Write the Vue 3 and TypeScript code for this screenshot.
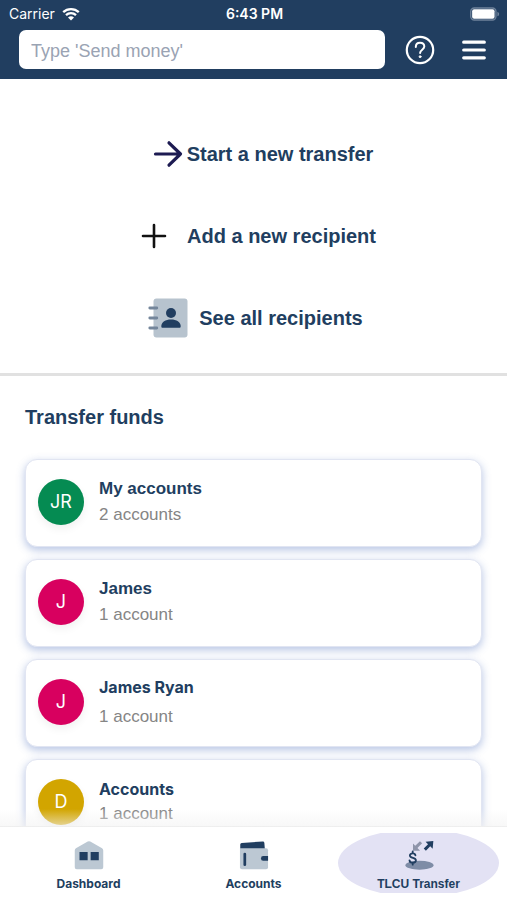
<script setup lang="ts">
import { ref } from 'vue'

interface Recipient {
  initials: string
  name: string
  detail: string
  tone: 'green' | 'pink' | 'gold'
  spacing: 'normal' | 'loose' | 'tight'
  face: 'classic' | 'modern'
}

const query = ref('')

const recipients: Recipient[] = [
  { initials: 'JR', name: 'My accounts', detail: '2 accounts', tone: 'green', spacing: 'normal', face: 'classic' },
  { initials: 'J', name: 'James', detail: '1 account', tone: 'pink', spacing: 'normal', face: 'classic' },
  { initials: 'J', name: 'James Ryan', detail: '1 account', tone: 'pink', spacing: 'loose', face: 'modern' },
  { initials: 'D', name: 'Accounts', detail: '1 account', tone: 'gold', spacing: 'tight', face: 'modern' },
]
</script>

<template>
  <div class="app">
    <header class="header">
      <div class="status">
        <div class="status-left">
          <span>Carrier</span>
          <svg class="wifi" viewBox="0 0 18 14" aria-hidden="true">
            <path d="M1.2 5.2a11.2 11.2 0 0 1 15.6 0M4 8.1a7.2 7.2 0 0 1 10 0" fill="none" stroke="#fff" stroke-width="2.3" />
            <path d="M9 13.6 6 10.6a4.3 4.3 0 0 1 6 0z" fill="#fff" />
          </svg>
        </div>
        <span class="time">6:43 PM</span>
        <div class="status-right">
          <svg class="battery" viewBox="0 0 31 14" aria-hidden="true">
            <rect x=".8" y=".8" width="26" height="12.4" rx="3.6" fill="none" stroke="#6f839b" stroke-width="1.4" />
            <rect x="2.2" y="2.2" width="23.2" height="9.6" rx="2" fill="#fff" />
            <path d="M28.3 4.6c2.4.8 2.4 4 0 4.8z" fill="#6f839b" />
          </svg>
        </div>
      </div>
      <div class="toolbar">
        <input v-model="query" class="search" type="text" aria-label="Search" placeholder="Type 'Send money'" />
        <button class="icon-button" type="button" aria-label="Help">
          <svg width="30" height="30" viewBox="0 0 30 30" fill="none" stroke="#fff" stroke-linecap="round" stroke-linejoin="round">
            <circle cx="15" cy="15" r="13.2" stroke-width="2.2" />
            <path d="M10.8 12c0-2.600 1.700-4.200 4.200-4.200s4.300 1.500 4.300 3.800c0 3-4.200 3.200-4.200 6.300" stroke-width="2" />
            <circle cx="15.1" cy="21.7" r="1" fill="#fff" stroke-width=".8" />
          </svg>
        </button>
        <button class="icon-button" type="button" aria-label="Menu">
          <svg width="24" height="20" viewBox="0 0 24 20" stroke="#fff" stroke-width="3.2" stroke-linecap="round">
            <path d="M1.7 2.2h20.6M1.7 10h20.6M1.7 17.8h20.6" />
          </svg>
        </button>
      </div>
    </header>

    <main class="content">
      <section class="actions">
        <button class="action action-start" type="button">
          <svg width="30" height="28" viewBox="0 0 30 28" fill="none" stroke="#1d1b52" stroke-width="3.2" stroke-linecap="round" stroke-linejoin="round">
            <path d="M2.5 14h25M16 2.8 27.5 14 16 25.2" />
          </svg>
          Start a new transfer
        </button>
        <button class="action action-add" type="button">
          <svg width="26" height="26" viewBox="0 0 26 26" stroke="#111" stroke-width="2.6" stroke-linecap="round">
            <path d="M13 2v22M2 13h22" />
          </svg>
          Add a new recipient
        </button>
        <button class="action action-all" type="button">
          <svg width="40" height="40" viewBox="0 0 40 40">
            <rect x="5.5" y=".5" width="34" height="39" rx="3" fill="#b7c3ce" />
            <path d="M1.8 10h7M1.8 20h7M1.8 30h7" stroke="#74869b" stroke-width="2.8" stroke-linecap="round" />
            <circle cx="23" cy="15" r="5" fill="#213e60" />
            <path d="M13.3 28.2c0-4.300 4.200-6.800 9.700-6.800s9.700 2.500 9.700 6.800c0 1-.5 1.600-1.400 1.600H14.700c-.9 0-1.400-.6-1.400-1.600z" fill="#213e60" />
          </svg>
          See all recipients
        </button>
      </section>

      <section class="funds">
        <h2 class="title">Transfer funds</h2>
        <ul class="cards">
          <li v-for="(item, index) in recipients" :key="index">
            <button class="card" type="button">
              <span class="avatar" :class="item.tone">{{ item.initials }}</span>
              <span class="card-text" :class="item.spacing">
                <span class="name" :class="item.face">{{ item.name }}</span>
                <span class="detail">{{ item.detail }}</span>
              </span>
            </button>
          </li>
        </ul>
      </section>
    </main>

    <nav class="tabs" aria-label="Main">
      <a class="tab" href="#dashboard">
        <svg width="32" height="32" viewBox="0 0 32 32" aria-hidden="true">
          <path d="M16 1.2q.7 0 1.3.4L29.5 8.6q1.2.8 1.2 2.2v17.4q0 2-2 2H3.3q-2 0-2-2V10.8q0-1.4 1.2-2.2L14.7 1.6q.6-.4 1.3-.4z" fill="#bcc8d3" />
          <path d="M6.2 12.500h8.400v8.400H6.200zM17.700 12.500h8.400v8.400h-8.400z" fill="#213e60" />
        </svg>
        <span>Dashboard</span>
      </a>
      <a class="tab" href="#accounts">
        <svg width="32" height="32" viewBox="0 0 32 32" aria-hidden="true">
          <path d="M1.8 4.600q0-1.500 1.500-1.600L25 1.600q1.600-.1 1.700 1.400l.5 6.500H1.800z" fill="#213e60" />
          <path d="M1.500 8.500h27q2 0 2 2v17.700q0 2-2 2h-25q-2 0-2-2z" fill="#bcc8d3" />
          <path d="M6.500 14.500v11" stroke="#213e60" stroke-width="2.800" stroke-linecap="round" />
          <path d="M30.500 16.500h-5q-2.300 0-2.300 2.500t2.300 2.500h5z" fill="#213e60" />
        </svg>
        <span>Accounts</span>
      </a>
      <a class="tab active" href="#transfer" aria-current="page">
        <svg width="32" height="32" viewBox="0 0 32 32" aria-hidden="true">
          <ellipse cx="16.5" cy="26" rx="14.5" ry="4.600" fill="#7e8ca6" />
          <path d="M9.800 11V3.600l2.300 2.300L17 1.200l2.200 2.200-4.800 4.900 2.700 2.700z" fill="#8f95aa" />
          <path d="m20.900 8.700 4.400-4.400-2.500-2.500 8-.8-.7 8-2.500-2.500-4.500 4.500z" fill="#213e60" />
          <path d="M12.300 15.800c-.2-1.300-1.200-2-2.800-2-1.700 0-2.900.9-2.900 2.200 0 3.300 6.200 1.600 6.200 5 0 1.500-1.300 2.500-3.200 2.500-1.900 0-3.200-.9-3.400-2.500M9.500 11.800v2M9.500 23.500v2" fill="none" stroke="#213e60" stroke-width="1.900" stroke-linecap="round" />
        </svg>
        <span>TLCU Transfer</span>
      </a>
    </nav>
  </div>
</template>

<style>
body {
  margin: 0;
  background: #fff;
}
</style>

<style scoped>
.app {
  display: flex;
  flex-direction: column;
  height: 100vh;
  overflow: hidden;
  color: #213e60;
  background: #fff;
  font-family: "Liberation Sans", Arial, sans-serif;
}

button {
  padding: 0;
  border: 0;
  color: inherit;
  background: none;
  font: inherit;
  cursor: pointer;
}

.header {
  flex: none;
  padding-bottom: 10px;
  color: #fff;
  background: #213e60;
}

.status {
  display: grid;
  grid-template-columns: 1fr auto 1fr;
  align-items: center;
  height: 30px;
  padding: 0 7px 3px 9px;
  box-sizing: border-box;
  font: 14px/26px Inter, sans-serif;
}

.status-left {
  display: flex;
  align-items: center;
  gap: 7px;
}

.wifi {
  width: 18px;
  height: 14px;
}

.time {
  font-weight: 600;
}

.status-right {
  display: flex;
  justify-content: flex-end;
}

.battery {
  width: 30px;
  height: 14px;
}

.toolbar {
  display: flex;
  align-items: center;
  padding: 0 21px 0 19px;
}

.search {
  flex: 1;
  min-width: 0;
  height: 39px;
  margin-right: 20px;
  padding: 3px 12px 0;
  box-sizing: border-box;
  border: 0;
  border-radius: 7px;
  color: #213e60;
  background: #fff;
  font: 18px "Liberation Sans", Arial, sans-serif;
}

.search::placeholder {
  color: #9aa3b3;
  opacity: 1;
}

.icon-button {
  display: flex;
}

.icon-button + .icon-button {
  margin-left: 27px;
}

.content {
  position: relative;
  flex: 1;
  min-height: 0;
  overflow: hidden;
}

.actions {
  display: flex;
  flex-direction: column;
  align-items: center;
  gap: 42px;
  padding: 55px 0 35px;
  border-bottom: 3px solid #e1e1e1;
}

.action {
  display: flex;
  align-items: center;
  height: 40px;
  font-size: 20px;
  font-weight: 700;
}

.action-start {
  gap: 4px;
  padding-left: 19px;
}

.action-add {
  gap: 20px;
  padding-left: 10px;
}

.action-all {
  gap: 11px;
  padding-left: 4px;
}

.funds {
  padding: 29px 25px 20px;
}

.title {
  margin: 0 0 30px;
  font-size: 20px;
  line-height: 24px;
}

.cards {
  display: flex;
  flex-direction: column;
  gap: 12px;
  margin: 0;
  padding: 0;
  list-style: none;
}

.card {
  display: flex;
  align-items: center;
  gap: 15px;
  width: 100%;
  height: 88px;
  padding: 0 12px 3px;
  border: 1px solid #e1e5f2;
  border-radius: 12px;
  background: #fff;
  box-shadow: 0 3px 9px rgba(80, 115, 190, 0.42);
  text-align: left;
}

.avatar {
  display: flex;
  flex: none;
  align-items: center;
  justify-content: center;
  width: 46px;
  height: 46px;
  border-radius: 50%;
  color: #fff;
  box-shadow: 0 4px 8px rgba(0, 0, 0, 0.06);
  font: 18px Inter, sans-serif;
}

.green {
  background: #058b52;
}

.pink {
  background: #d8005f;
}

.gold {
  background: #d2a500;
}

.card-text {
  display: flex;
  flex-direction: column;
  line-height: 20px;
}

.normal {
  gap: 6px;
}

.loose {
  gap: 10px;
}

.tight {
  gap: 5px;
}

.name {
  font-weight: 700;
}

.classic {
  font-size: 17px;
}

.modern {
  font-family: Inter, sans-serif;
  font-size: 16px;
}

.detail {
  color: #858585;
  font-size: 17px;
}

.tabs {
  position: relative;
  display: grid;
  flex: none;
  grid-template-columns: repeat(3, 1fr);
  padding: 6px 6px 7px;
  border-top: 1px solid #e6e6e6;
  background: #fff;
}

.tabs::before {
  position: absolute;
  right: 0;
  bottom: 100%;
  left: 0;
  height: 18px;
  background: linear-gradient(rgba(247, 247, 247, 0), rgba(243, 243, 243, 0.65));
  content: "";
  pointer-events: none;
}

.tab {
  position: relative;
  display: flex;
  flex-direction: column;
  align-items: center;
  gap: 4px;
  height: 60px;
  padding-top: 7px;
  box-sizing: border-box;
  overflow: hidden;
  color: #213e60;
  font: 700 12px/18px Inter, sans-serif;
  text-decoration: none;
}

.tab svg,
.tab span {
  position: relative;
}

.active {
  font-family: "Liberation Sans", Arial, sans-serif;
}

.active::before {
  position: absolute;
  inset: -4px 2px;
  border-radius: 50%;
  background: #e3e2f4;
  content: "";
}
</style>
